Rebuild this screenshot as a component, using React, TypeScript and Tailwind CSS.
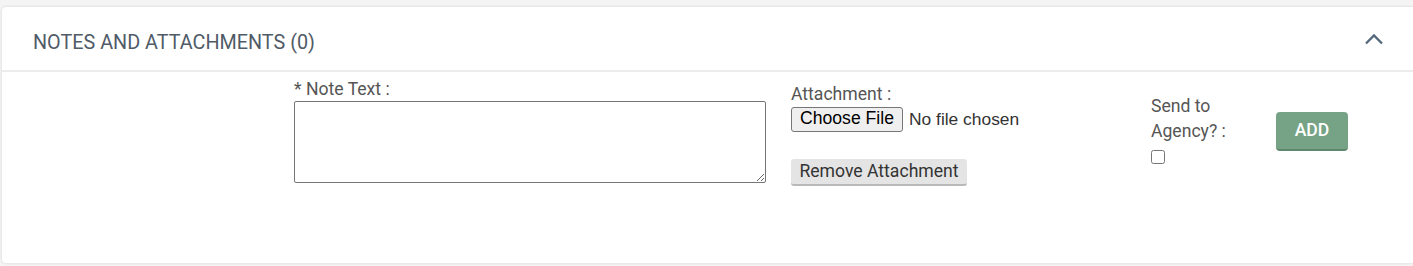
import React from 'react';

export default function App() {
  return (
    <div className="h-[266px] w-[1413px] overflow-hidden bg-[#f4f4f4] pt-[7px] pl-[2px] font-['Roboto',sans-serif]">
      <div className="w-[1420px] h-[256px] bg-white rounded-[4px] shadow-[0_0_3px_rgba(0,0,0,0.14)]">
        {/* header */}
        <div className="h-[63px] flex items-center justify-between pl-[31px] pr-[38px] pt-[8px]">
          <h2 className="text-[19.8px] text-[#505b67] leading-[24px]">NOTES AND ATTACHMENTS (0)</h2>
          <svg width="20" height="12" viewBox="0 0 20 12" className="mb-[8px]">
            <path d="M2 10.5 L10 2.5 L18 10.5" fill="none" stroke="#53697b" strokeWidth="2.3" />
          </svg>
        </div>
        <div className="h-[2px] bg-[#ececec]" />

        {/* form row */}
        <div className="flex items-start pl-[292px] text-[17.6px] text-[#555]">
          <div className="w-[472px] mt-[7px] flex flex-col">
            <label className="leading-[20px]">* Note Text :</label>
            <textarea className="mt-[2px] h-[82px] w-[472px] border border-[#767676] rounded-[2px] bg-white" />
          </div>

          <div className="ml-[25px] w-[360px] mt-[12px] flex flex-col items-start">
            <label className="leading-[20px]">Attachment :</label>
            <div className="mt-[2px] flex items-center font-['Liberation_Sans',Arial,sans-serif]">
              <button className="w-[112px] h-[25px] border border-[#767676] bg-[#efefef] rounded-[3px] text-[17.6px] text-black leading-none">
                Choose File
              </button>
              <span className="ml-[6px] text-[17.4px] text-[#333]">No file chosen</span>
            </div>
            <button className="mt-[27px] w-[176px] h-[27px] bg-[#e4e4e4] border-b-2 border-[#b9b9b9] rounded-[3px] text-[17.6px] text-[#333] leading-none">
              Remove Attachment
            </button>
          </div>

          <div className="w-[125px] mt-[22px] flex flex-col items-start">
            <span className="leading-[25px]">Send to</span>
            <span className="leading-[25px]">Agency? :</span>
            <input type="checkbox" className="mt-[6px] m-0 w-[14px] h-[14px]" />
          </div>

          <button className="mt-[40px] w-[72px] h-[39px] bg-[#76a386] border-b-2 border-[#5c876a] rounded-[4px] text-white text-[17.6px] font-medium">
            ADD
          </button>
        </div>
      </div>
    </div>
  );
}
